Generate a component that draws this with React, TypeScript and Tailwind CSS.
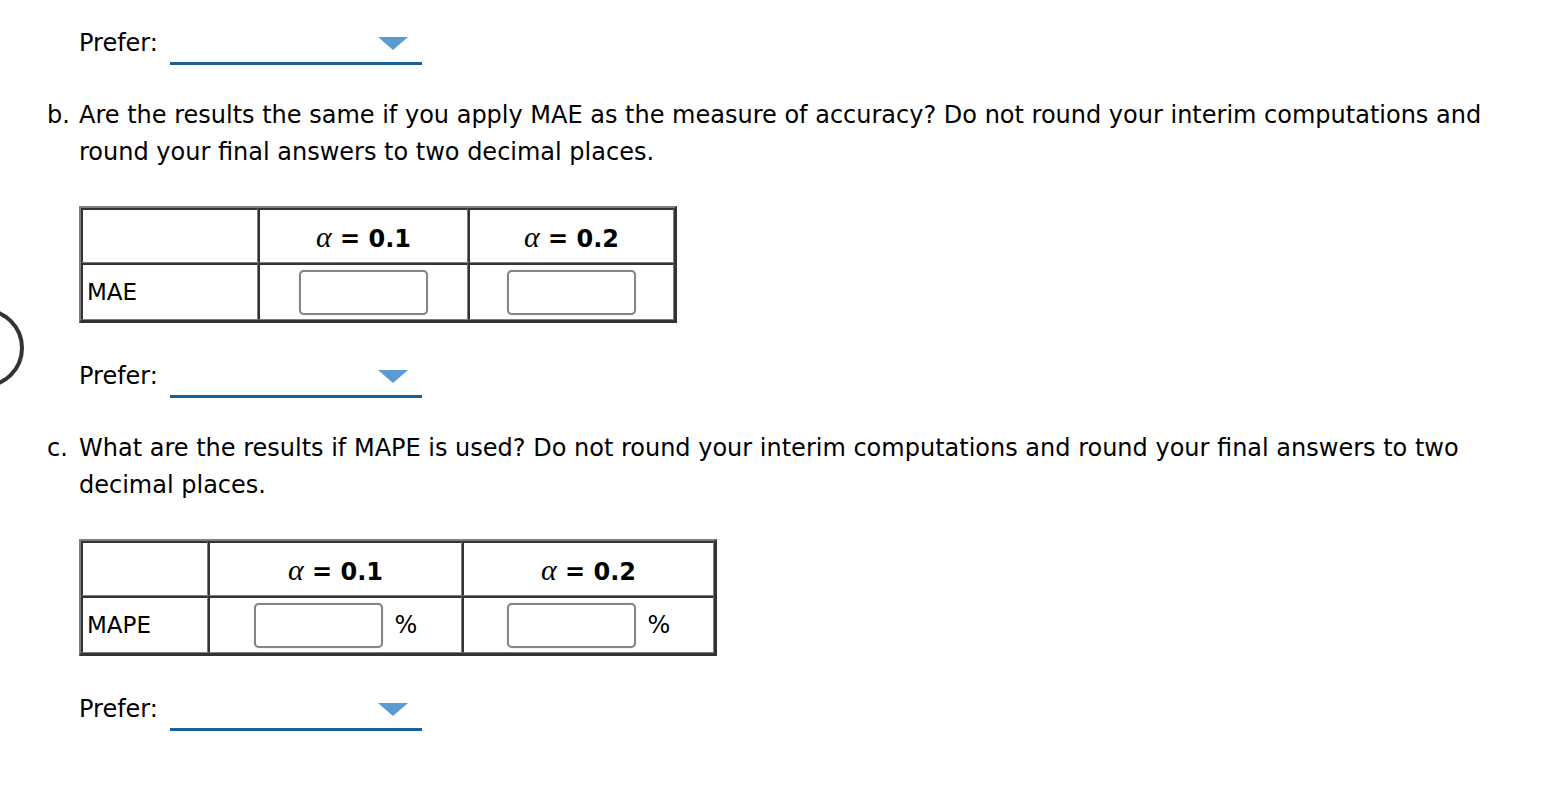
import React from "react";

const font = { fontFamily: '"DejaVu Sans", Verdana, sans-serif' };

function Prefer() {
  return (
    <div className="flex items-start pl-[79px]">
      <span className="h-[36px] leading-[36px] text-[24px] text-black">Prefer:</span>
      <div className="ml-[12px] flex h-[40px] w-[252px] justify-end border-b-[3px] border-[#19609b] pr-[14px] pt-[12px]">
        <svg width="30" height="13" viewBox="0 0 30 13">
          <polygon points="0,0 30,0 15,13" fill="#5a9bd3" />
        </svg>
      </div>
    </div>
  );
}

function Alpha({ v }: { v: string }) {
  return (
    <span className="text-[24px] text-black">
      <span className="italic text-[30px]" style={{ fontFamily: '"Liberation Serif", serif' }}>
        α
      </span>
      <span className="font-bold"> = {v}</span>
    </span>
  );
}

function Box() {
  return (
    <div className="h-[45px] w-[129px] rounded-[5px] border-2 border-[#858585] bg-white shadow-[0_0_1px_#9a9a9a]" />
  );
}

const cell =
  "border-t-2 border-l-2 border-r border-b border-t-[#333] border-l-[#333] border-r-[#7f7f7f] border-b-[#7f7f7f] p-0";

function Grid({
  label,
  widths,
  total,
  pct,
}: {
  label: string;
  widths: [string, string];
  total: string;
  pct?: boolean;
}) {
  return (
    <table
      className={`ml-[79px] border-separate border-spacing-0 border-t-2 border-l-2 border-b-[3px] border-r-[3px] border-t-[#808080] border-l-[#808080] border-b-[#333] border-r-[#333] ${total}`}
    >
      <tbody>
        <tr className="h-[55px]">
          <td className={`${cell} ${widths[0]}`}></td>
          <td className={`${cell} ${widths[1]} text-center`}>
            <Alpha v="0.1" />
          </td>
          <td className={`${cell} text-center`}>
            <Alpha v="0.2" />
          </td>
        </tr>
        <tr className="h-[57px]">
          <td className={`${cell} pl-[4px] text-[23px] text-black`}>{label}</td>
          {[0, 1].map((i) => (
            <td key={i} className={cell}>
              <div className="flex items-center justify-center gap-[12px]">
                <Box />
                {pct && <span className="text-[24px] text-black">%</span>}
              </div>
            </td>
          ))}
        </tr>
      </tbody>
    </table>
  );
}

export default function App() {
  return (
    <div className="relative min-h-[794px] w-[1544px] overflow-hidden bg-white pt-[25px]" style={font}>
      <div className="absolute left-[-56px] top-[308px] h-[80px] w-[80px] rounded-full border-4 border-[#333]" />

      <Prefer />

      <div className="mt-[32px] flex whitespace-nowrap pl-[47px] text-[24px] leading-[37px] text-black">
        <span className="w-[32px] shrink-0">b.</span>
        <span>
          Are the results the same if you apply MAE as the measure of accuracy? Do not round your interim computations and
          <br />
          round your final answers to two decimal places.
        </span>
      </div>

      <div className="mt-[35px]">
        <Grid label="MAE" widths={["w-[177px]", "w-[210px]"]} total="w-[598px]" />
      </div>

      <div className="mt-[35px]">
        <Prefer />
      </div>

      <div className="mt-[32px] flex whitespace-nowrap pl-[47px] text-[24px] leading-[37px] text-black">
        <span className="w-[32px] shrink-0">c.</span>
        <span>
          What are the results if MAPE is used? Do not round your interim computations and round your final answers to two
          <br />
          decimal places.
        </span>
      </div>

      <div className="mt-[35px]">
        <Grid label="MAPE" widths={["w-[127px]", "w-[254px]"]} total="w-[638px]" pct />
      </div>

      <div className="mt-[35px]">
        <Prefer />
      </div>
    </div>
  );
}
